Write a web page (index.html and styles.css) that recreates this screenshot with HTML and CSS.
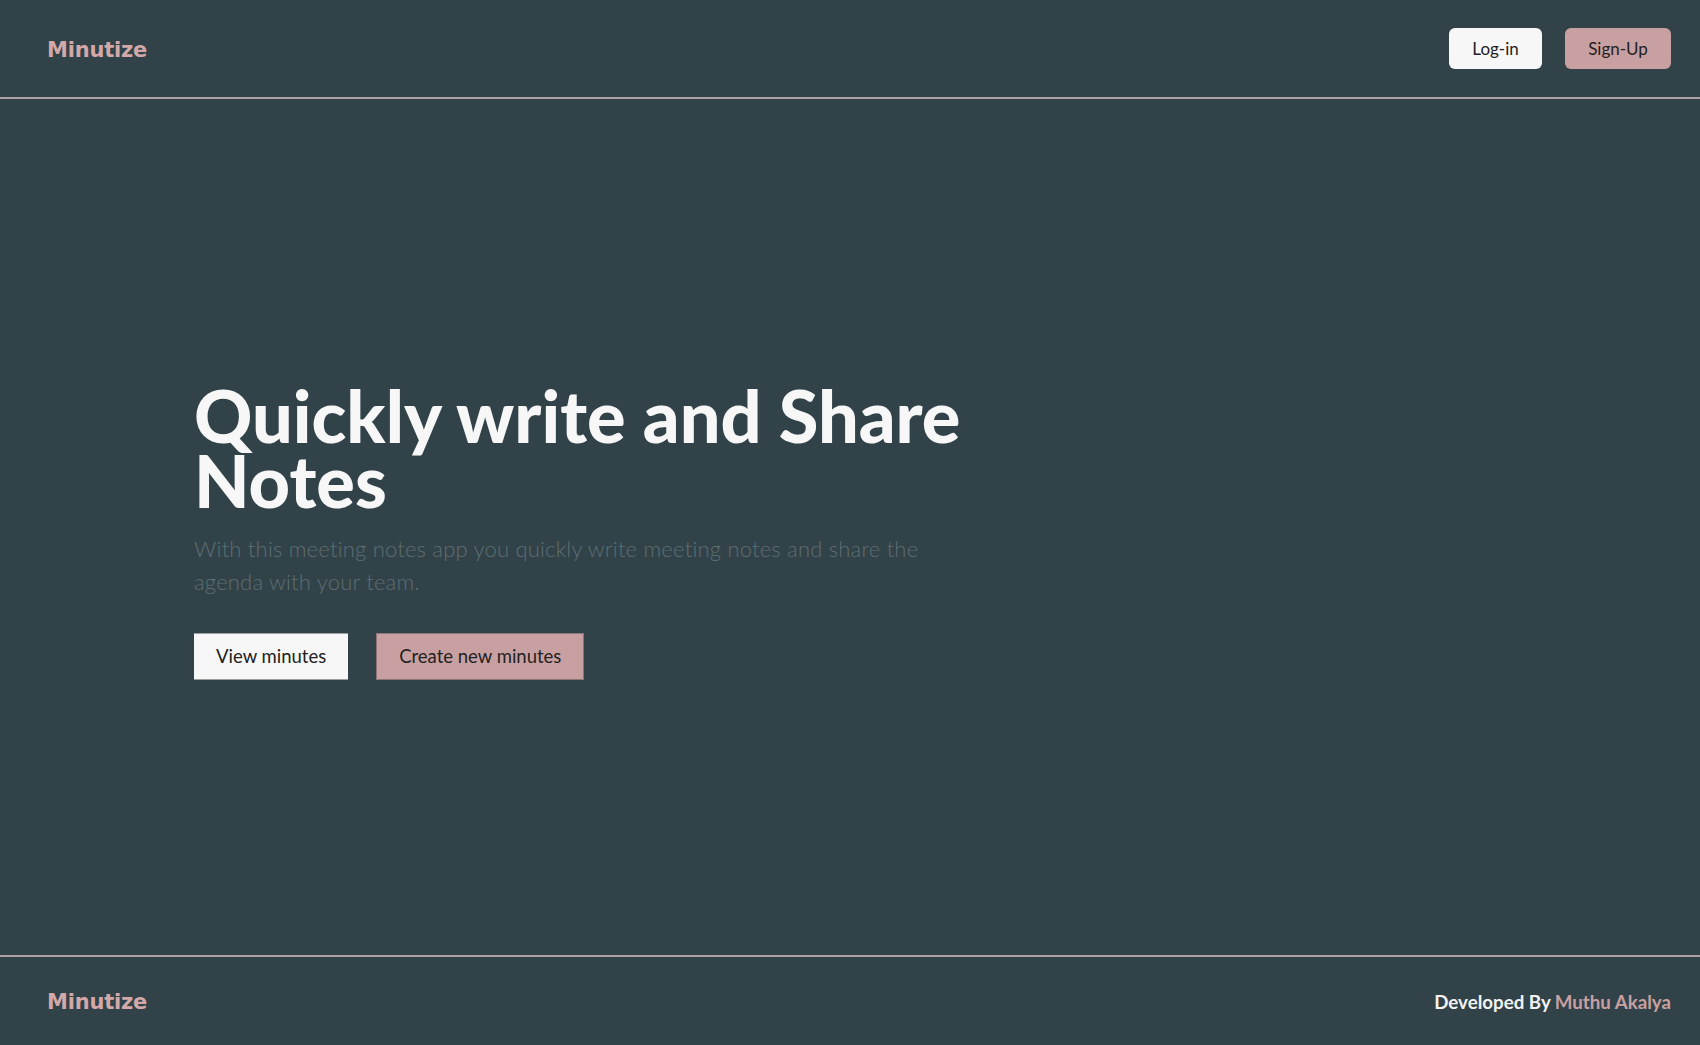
FILE: index.html
```html
<!DOCTYPE html>
<html lang="en">
<head>
<meta charset="utf-8">
<title>Minutize</title>
<link rel="stylesheet" href="styles.css">
</head>
<body>
<div class="page">
  <header class="topbar">
    <a class="logo" href="#">Minutize</a>
    <nav class="auth">
      <a class="btn-sm btn-light" href="#">Log-in</a>
      <a class="btn-sm btn-pink" href="#">Sign-Up</a>
    </nav>
  </header>
  <main class="hero">
    <div class="hero-inner">
      <h1 class="hero-title">Quickly write and Share Notes</h1>
      <p class="hero-lead">With this meeting notes app you quickly write meeting notes and share the agenda with your team.</p>
      <div class="hero-actions">
        <a class="btn-lg btn-light" href="#">View minutes</a>
        <a class="btn-lg btn-pink" href="#">Create new minutes</a>
      </div>
    </div>
  </main>
  <footer class="footer">
    <a class="logo" href="#">Minutize</a>
    <div class="credit">Developed By <span class="author">Muthu Akalya</span></div>
  </footer>
</div>
</body>
</html>
```

FILE: styles.css
```css
* { box-sizing: border-box; }
html, body { margin: 0; padding: 0; }
body {
  background: #314248;
  font-family: "Lato", "Open Sans", sans-serif;
  color: #f7f7f7;
}
a { text-decoration: none; }
.page {
  min-height: 1045px;
  display: flex;
  flex-direction: column;
}
.topbar {
  height: 99px;
  border-bottom: 2px solid #b09fa1;
  display: flex;
  align-items: center;
  justify-content: space-between;
  padding: 3px 29px 0 47px;
}
.logo {
  font-family: "DejaVu Sans", "Verdana", sans-serif;
  font-weight: 700;
  font-size: 21px;
  color: #d3a8a9;
  letter-spacing: -0.2px;
}
.auth {
  display: flex;
  gap: 23px;
  margin-top: -4px;
}
.btn-sm {
  display: inline-flex;
  align-items: center;
  justify-content: center;
  height: 41px;
  border-radius: 6px;
  font-size: 17px;
  font-weight: 400;
  color: #222;
}
.auth .btn-light { width: 93px; }
.auth .btn-pink { width: 106px; }
.btn-light { background: #f7f7f7; }
.btn-pink { background: #c9a0a1; }
.hero {
  flex: 1;
  display: flex;
  align-items: center;
  padding: 0 0 0 194px;
}
.hero-inner {
  padding-top: 8px;
}
.hero-title {
  margin: 0;
  font-family: "Lato", sans-serif;
  font-weight: 900;
  font-size: 72px;
  line-height: 65px;
  letter-spacing: 0;
  color: #f7f7f7;
  width: 800px;
}
.hero-lead {
  margin: 19px 0 0 0;
  width: 770px;
  font-family: "Lato", sans-serif;
  font-weight: 300;
  font-size: 22px;
  line-height: 33px;
  letter-spacing: 0.2px;
  color: #5f6e73;
}
.hero-actions {
  display: flex;
  gap: 28px;
  margin-top: 35px;
}
.btn-lg {
  display: inline-flex;
  align-items: center;
  justify-content: center;
  height: 47px;
  padding: 0 22px;
  font-size: 18.5px;
  color: #222;
  border-top: 1px solid #9aa0a2;
  border-bottom: 1px solid #9aa0a2;
}
.btn-lg.btn-pink { border: 1px solid #8d7677; }
.footer {
  height: 90px;
  border-top: 2px solid #b09fa1;
  display: flex;
  align-items: center;
  justify-content: space-between;
  padding: 2px 29px 0 47px;
}
.credit {
  font-size: 18.7px;
  font-weight: 700;
  color: #f2f2f2;
}
.author {
  font-weight: 700;
  color: #c9a0a1;
}
```
